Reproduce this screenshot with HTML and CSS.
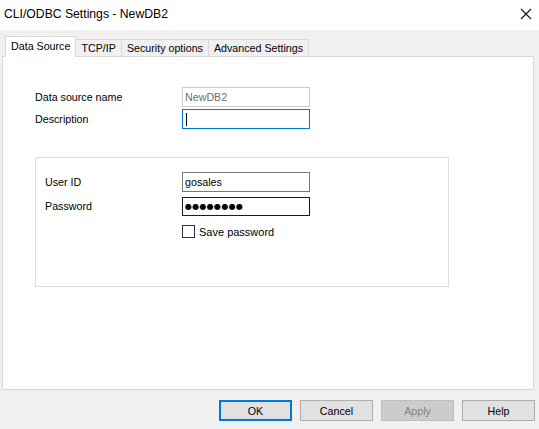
FILE: index.html
```html
<!DOCTYPE html>
<html>
<head>
<meta charset="utf-8">
<link rel="stylesheet" href="styles.css">
</head>
<body>
<div class="window">
  <div class="titlebar">
    <span class="title">CLI/ODBC Settings - NewDB2</span>
    <span class="close"><svg width="12" height="12" viewBox="0 0 12 12"><path d="M1 1 L11 11 M11 1 L1 11" stroke="#111" stroke-width="1.1" fill="none"/></svg></span>
  </div>
  <div class="tabs">
    <div class="tab active">Data Source</div>
    <div class="tab">TCP/IP</div>
    <div class="tab">Security options</div>
    <div class="tab">Advanced Settings</div>
  </div>
  <div class="panel">
    <div class="row">
      <span class="label">Data source name</span>
      <span class="input disabled">NewDB2</span>
    </div>
    <div class="row">
      <span class="label">Description</span>
      <span class="input focused"><span class="caret"></span></span>
    </div>
    <div class="group">
      <div class="row g">
        <span class="label">User ID</span>
        <span class="input normal">gosales</span>
      </div>
      <div class="row g">
        <span class="label">Password</span>
        <span class="input dark"><span class="dots">●●●●●●●●</span></span>
      </div>
      <div class="check-row">
        <span class="checkbox"></span>
        <span class="check-label">Save password</span>
      </div>
    </div>
  </div>
  <div class="buttons">
    <div class="btn default">OK</div>
    <div class="btn">Cancel</div>
    <div class="btn disabled-btn">Apply</div>
    <div class="btn">Help</div>
  </div>
</div>
</body>
</html>
```
FILE: styles.css
```css
html, body {
  margin: 0;
  padding: 0;
}
body {
  width: 539px;
  height: 429px;
  background: #f0f0f0;
  font-family: "Liberation Sans", Arial, sans-serif;
  font-size: 10.7px;
  color: #000;
  overflow: hidden;
}
.window {
  width: 539px;
  height: 429px;
  display: flex;
  flex-direction: column;
}
.titlebar {
  height: 30px;
  background: #fff;
  display: flex;
  align-items: center;
  justify-content: space-between;
  padding-left: 4px;
  padding-right: 7px;
  box-sizing: border-box;
}
.title {
  font-family: "Liberation Sans", Arial, sans-serif;
  font-size: 12.2px;
  color: #000;
  margin-top: -3px;
}
.close {
  display: flex;
  margin-top: -2px;
}
.tabs {
  height: 26px;
  display: flex;
  align-items: flex-end;
  padding-left: 5px;
  box-sizing: border-box;
}
.tab {
  height: 17px;
  border: 1px solid #d9d9d9;
  border-bottom: none;
  border-left: none;
  padding: 0 5px;
  display: flex;
  align-items: center;
  background: #f0f0f0;
  box-sizing: border-box;
  line-height: 1;
}
.tab.active {
  height: 21px;
  background: #fff;
  border-left: 1px solid #d9d9d9;
  margin-bottom: -1px;
  position: relative;
  z-index: 1;
  padding: 0 5px 1px 5px;
}
.panel {
  margin-left: 2px;
  width: 532px;
  height: 334px;
  background: #fff;
  border: 1px solid #d9d9d9;
  box-sizing: border-box;
  padding-top: 30px;
  padding-left: 32px;
}
.row {
  display: flex;
  align-items: center;
  height: 20px;
  margin-bottom: 2px;
}
.label {
  width: 147px;
  flex: none;
}
.input {
  width: 128px;
  height: 20px;
  box-sizing: border-box;
  border: 1px solid #7a7a7a;
  background: #fff;
  display: flex;
  align-items: center;
  padding-left: 2px;
}
.input.disabled {
  border-color: #cccccc;
  color: #6d6d6d;
}
.input.focused {
  border-color: #0078d7;
}
.caret {
  width: 1px;
  height: 13px;
  background: #000;
  margin-left: 1px;
}
.input.dark {
  border-color: #1a1a1a;
  height: 19px;
}
.dots {
  font-size: 8px;
  letter-spacing: 0.3px;
  font-family: "DejaVu Sans", sans-serif;
}
.group {
  margin-top: 28px;
  width: 414px;
  height: 130px;
  border: 1px solid #dcdcdc;
  box-sizing: border-box;
  padding-top: 14px;
  padding-left: 9px;
}
.row.g {
  margin-bottom: 4px;
}
.row.g .label {
  width: 137px;
}
.check-row {
  display: flex;
  align-items: center;
  margin-left: 137px;
  margin-top: 9px;
}
.checkbox {
  width: 13px;
  height: 13px;
  box-sizing: border-box;
  border: 1px solid #333;
  background: #fff;
}
.check-label {
  margin-left: 4px;
  font-size: 11px;
}
.buttons {
  display: flex;
  justify-content: flex-end;
  gap: 8px;
  padding-right: 4px;
  margin-top: 10px;
}
.btn {
  width: 73px;
  height: 21px;
  box-sizing: border-box;
  border: 1px solid #adadad;
  background: #e1e1e1;
  display: flex;
  align-items: center;
  justify-content: center;
}
.btn.default {
  border: 2px solid #0078d7;
}
.btn.disabled-btn {
  background: #cccccc;
  border-color: #bfbfbf;
  color: #838383;
}
```
